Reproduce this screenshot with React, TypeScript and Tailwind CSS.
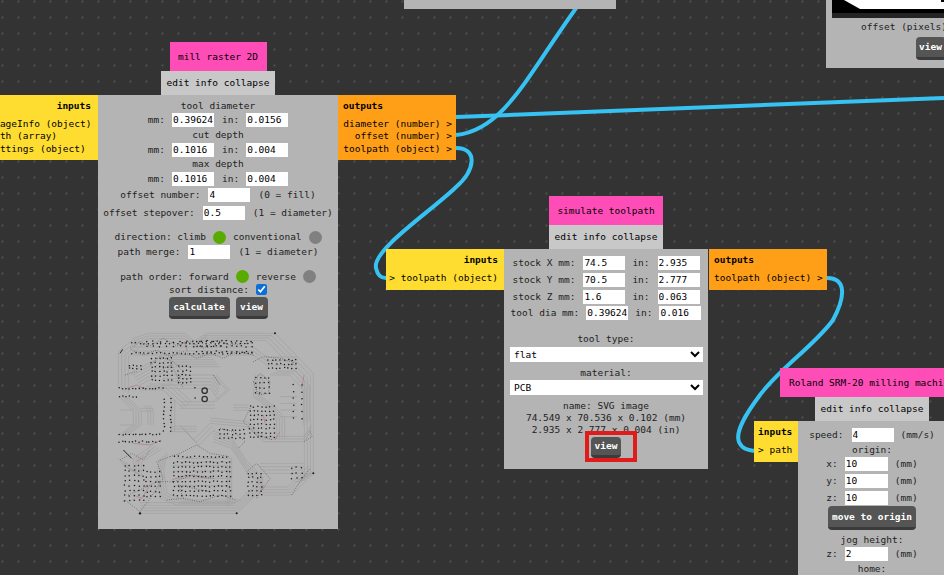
import React from "react";

const hash = (n: number) => {
  const s = Math.sin(n * 127.1 + 11.7) * 43758.5453;
  return s - Math.floor(s);
};

type P = [number, number];
const bundles: { pts: P[]; n: number; dx: number; dy: number }[] = [
  { pts: [[320, 25], [525, 25], [640, 145], [640, 445], [610, 450]], n: 4, dx: -9, dy: 7 },
  { pts: [[100, 40], [145, 25], [255, 25], [282, 48], [320, 25]], n: 3, dx: 0, dy: 8 },
  { pts: [[100, 42], [55, 80], [55, 190]], n: 4, dx: 10, dy: 5 },
  { pts: [[60, 215], [100, 260], [100, 300], [58, 330]], n: 4, dx: 8, dy: 0 },
  { pts: [[150, 240], [160, 260], [160, 300]], n: 3, dx: -8, dy: 0 },
  { pts: [[60, 300], [100, 300]], n: 2, dx: 0, dy: -45 },
  { pts: [[90, 145], [190, 90], [330, 90]], n: 6, dx: 6, dy: 7 },
  { pts: [[190, 150], [340, 150], [360, 180]], n: 5, dx: -2, dy: 10 },
  { pts: [[250, 250], [190, 195], [120, 195]], n: 4, dx: 9, dy: -6 },
  { pts: [[240, 250], [345, 250]], n: 3, dx: 0, dy: -10 },
  { pts: [[465, 150], [460, 215], [500, 245], [530, 280], [530, 340]], n: 4, dx: 8, dy: 0 },
  { pts: [[510, 150], [570, 150], [610, 195], [610, 300]], n: 3, dx: 9, dy: -6 },
  { pts: [[635, 315], [612, 350], [490, 350], [440, 305], [330, 295]], n: 3, dx: 0, dy: -8 },
  { pts: [[330, 295], [280, 345], [240, 300]], n: 3, dx: 8, dy: 8 },
  { pts: [[215, 320], [290, 320]], n: 3, dx: 0, dy: -8 },
  { pts: [[215, 320], [215, 225]], n: 2, dx: 9, dy: 0 },
  { pts: [[120, 565], [410, 565], [490, 490], [440, 440], [395, 370], [340, 350]], n: 5, dx: 0, dy: -8 },
  { pts: [[480, 415], [610, 415]], n: 4, dx: 0, dy: 10 },
  { pts: [[490, 510], [575, 510], [640, 445]], n: 4, dx: -4, dy: -8 },
  { pts: [[55, 400], [75, 425], [100, 440], [100, 400], [160, 360]], n: 4, dx: 8, dy: 4 },
  { pts: [[180, 400], [170, 450], [180, 520], [230, 540], [400, 540]], n: 4, dx: 7, dy: -5 },
  { pts: [[230, 400], [395, 400], [395, 520]], n: 3, dx: -6, dy: 11 },
  { pts: [[225, 438], [390, 438]], n: 3, dx: 0, dy: 22 },
  { pts: [[100, 90], [460, 90], [500, 120], [590, 120]], n: 3, dx: 0, dy: -12 },
  { pts: [[540, 215], [590, 215]], n: 4, dx: 0, dy: 20 },
  { pts: [[340, 230], [380, 195], [340, 150]], n: 2, dx: 8, dy: 0 },
  { pts: [[400, 240], [445, 240]], n: 3, dx: 0, dy: 8 },
  { pts: [[120, 250], [160, 250]], n: 2, dx: 0, dy: 8 },
];

const grids: [number, number, number, number, number, number][] = [
  [95, 55, 30, 12.5, 1, 0],
  [95, 85, 30, 12.5, 1, 0],
  [88, 122, 4, 12, 2, 9],
  [58, 190, 14, 10, 1, 0],
  [58, 215, 6, 10, 1, 0],
  [192, 222, 2, 20, 9, 12],
  [58, 328, 13, 10, 1, 0],
  [58, 350, 13, 10, 1, 0],
  [222, 412, 15, 12, 4, 14],
  [222, 470, 15, 12, 4, 14],
  [75, 422, 5, 14, 8, 15],
  [140, 440, 4, 13, 6, 15],
  [580, 180, 2, 26, 6, 20],
  [468, 158, 4, 13, 4, 15],
  [450, 245, 7, 12, 8, 13],
  [360, 315, 7, 12, 3, 12],
  [445, 445, 4, 13, 6, 13],
  [575, 428, 3, 15, 3, 16],
  [155, 100, 6, 12, 6, 13],
  [235, 125, 4, 12, 5, 12],
  [505, 105, 8, 12, 3, 12],
  [285, 190, 1, 10, 2, 30],
  [225, 395, 14, 12, 1, 0],
  [140, 50, 12, 20, 2, 14],
  [290, 48, 12, 15, 3, 16],
];

const wiggles = [
  "90,70 120,50 150,62 190,40 230,62 270,50 310,70 350,45 390,60 440,55",
  "95,75 130,90 170,75 210,95 250,80 290,100 330,85 370,100 410,80 460,90",
  "150,120 180,95 220,110 250,140 230,170",
  "75,150 110,140",
  "340,150 360,180",
  "190,130 215,120 250,190",
  "60,405 95,385 130,405 150,375",
  "75,525 120,560 150,520 190,460 170,410 210,395",
  "210,395 240,385 290,360 330,385 390,395",
  "85,510 130,490 170,470 220,470 280,450 340,460",
  "200,525 250,520 300,530 360,510 410,525",
  "450,250 430,290 470,330 520,345",
  "440,440 470,415 510,460 470,520",
  "360,310 400,320 435,350 415,370",
  "460,110 490,95 540,100 590,115",
  "460,170 480,145 510,170 505,205 475,210 460,170",
  "250,520 235,480 280,490 330,500",
  "575,510 600,470 630,430",
  "630,320 636,335 612,350",
];

const reds = [
  "80,190 110,180 130,190",
  "240,60 255,50 262,80",
  "612,150 605,190",
  "100,355 150,360 185,345",
  "215,465 260,450 330,460",
  "100,510 125,520 150,480",
  "525,345 540,320",
  "480,500 490,480",
  "370,55 385,45",
  "490,270 495,295",
  "110,410 130,395",
];

function Pcb() {
  const dots: P[] = [];
  let seed = 1;
  grids.forEach(([x, y, cols, sx, rows, sy]) => {
    for (let r = 0; r < rows; r++)
      for (let c = 0; c < cols; c++) {
        seed += 1;
        dots.push([x + c * sx + (hash(seed) - 0.5) * 4, y + r * sy + (hash(seed + 500) - 0.5) * 4]);
      }
  });
  return (
    <svg viewBox="0 0 720 615" className="ml-[2px] mt-[6px] block h-[205px] w-[240px]">
      {bundles.map((b, i) =>
        Array.from({ length: b.n }).map((_, k) => (
          <polyline
            key={`${i}-${k}`}
            fill="none"
            stroke="#9b9b9b"
            strokeWidth="1.7"
            points={b.pts.map((p) => `${p[0] + k * b.dx},${p[1] + k * b.dy}`).join(" ")}
          />
        ))
      )}
      <g fill="none" stroke="#2a2a2a" strokeWidth="2" strokeDasharray="2 5">
        {wiggles.map((w, i) => (
          <polyline key={i} points={w} />
        ))}
      </g>
      <g fill="none" stroke="#b0687c" strokeWidth="1.6">
        {reds.map((r, i) => (
          <polyline key={i} points={r} />
        ))}
      </g>
      <g fill="none" stroke="#333" strokeWidth="4">
        <circle cx="314" cy="197" r="8" />
        <circle cx="314" cy="222" r="8" />
      </g>
      <g stroke="#222" strokeWidth="3">
        <line x1="60" y1="85" x2="68" y2="73" />
        <line x1="70" y1="375" x2="95" y2="400" />
      </g>
      <g fill="#1a1a1a">
        {dots.map((d, i) => (
          <circle key={i} cx={d[0]} cy={d[1]} r="2.3" />
        ))}
        <circle cx="120" cy="565" r="3.5" />
        <circle cx="410" cy="565" r="3" />
        <circle cx="525" cy="25" r="3" />
        <circle cx="640" cy="445" r="3" />
      </g>
    </svg>
  );
}

function Field({ value, w = "w-[42px]" }: { value: string; w?: string }) {
  return (
    <input
      readOnly
      value={value}
      className={`${w} h-[14px] shrink-0 bg-white pl-[1px] text-[9.5px] leading-[14px] text-black outline-none`}
    />
  );
}

function Row({ className = "", children }: { className?: string; children: React.ReactNode }) {
  return <div className={`flex items-center justify-center whitespace-pre ${className}`}>{children}</div>;
}

function Btn({ children, className = "" }: { children: React.ReactNode; className?: string }) {
  return (
    <div
      className={`flex items-center justify-center rounded-[4px] border-b-[3px] border-[#3b3b3b] bg-[#555555] font-bold text-white ${className}`}
    >
      {children}
    </div>
  );
}

function Dot({ on }: { on?: boolean }) {
  return <span className={`size-[13px] shrink-0 rounded-full ${on ? "bg-[#5aab00]" : "bg-[#808080]"}`} />;
}

function Node({
  title,
  className,
  cols,
  titleClass,
  inputs,
  outputs,
  children,
}: {
  title: string;
  className: string;
  cols: string;
  titleClass: string;
  inputs: React.ReactNode;
  outputs?: React.ReactNode;
  children: React.ReactNode;
}) {
  return (
    <div className={`absolute grid ${cols} ${className}`}>
      <div className="col-start-2 flex justify-center">
        <div className={`flex h-[29px] shrink-0 items-center justify-center whitespace-pre bg-[#ff4db8] text-black ${titleClass}`}>
          {title}
        </div>
      </div>
      <div className="col-start-2 flex justify-center">
        <div className="flex h-[24px] w-[114px] shrink-0 items-center justify-center whitespace-pre bg-[#c8c8c8] text-black">
          edit info collapse
        </div>
      </div>
      <div className="col-start-1 row-start-3">{inputs}</div>
      <div className="col-start-2 row-start-3">{children}</div>
      {outputs && <div className="col-start-3 row-start-3">{outputs}</div>}
    </div>
  );
}

export default function App() {
  return (
    <div className="relative h-[575px] w-[944px] overflow-hidden bg-[#333333] bg-[radial-gradient(circle,#505050_0.7px,transparent_1.2px)] bg-size-[16px_16px] bg-position-[10.5px_9.5px] font-['DejaVu_Sans_Mono',monospace] text-[9.5px] leading-none text-[#222]">
      <svg className="absolute inset-0" width="944" height="575" fill="none" stroke="#36c3f3" strokeWidth="4">
        <path d="M456 117 L944 98" />
        <path d="M456 135 C506 130 530 70 582 0" />
        <path d="M456 148 C478 148 476 170 455 188 C430 212 372 250 376 268 C378 277 382 278 386 278" />
        <path d="M827 278 C846 278 846 296 833 320 C815 345 780 368 760 395 C745 415 735 432 739 442 C742 449 748 450 754 451" />
      </svg>

      <div className="absolute left-[404px] top-0 h-[9px] w-[212px] bg-[#b4b4b4]" />

      <div className="absolute left-[826px] top-0 flex h-[68px] w-[154px] flex-col items-center bg-[#b4b4b4]">
        <svg width="142" height="18" className="shrink-0">
          <rect width="142" height="13" fill="#000" />
          <rect y="13" width="142" height="5" fill="#242424" />
          <polygon points="12,0 28,9 142,9 142,0" fill="#fff" />
          <rect x="109" y="0" width="3" height="2" fill="#000" />
        </svg>
        <div className="ml-[2px] mt-[4px] whitespace-pre">offset (pixels)</div>
        <Btn className="ml-[55px] mt-[5px] h-[23px] w-[30px] shrink-0">view</Btn>
      </div>

      <Node
        title="mill raster 2D"
        className="left-[-30px] top-[42px]"
        cols="grid-cols-[128px_240px_118px]"
        titleClass="w-[97px]"
        inputs={
          <div className="h-[65px] bg-[#fedd30] px-[7px] text-black">
            <div className="flex h-[22px] items-center justify-end font-bold">inputs</div>
            <div className="whitespace-pre">
              <div className="flex h-[13px] items-center">{"> imageInfo (object)"}</div>
              <div className="flex h-[12px] items-center">{"> path (array)"}</div>
              <div className="flex h-[13px] items-center">{"> settings (object)"}</div>
            </div>
          </div>
        }
        outputs={
          <div className="h-[65px] bg-[#ff9f18] pl-[5px] pr-[4px] text-black">
            <div className="flex h-[22px] items-center font-bold">outputs</div>
            <div className="whitespace-pre text-right">
              <div className="flex h-[13px] items-center justify-end">{"diameter (number) >"}</div>
              <div className="flex h-[12px] items-center justify-end">{"offset (number) >"}</div>
              <div className="flex h-[13px] items-center justify-end">{"toolpath (object) >"}</div>
            </div>
          </div>
        }
      >
        <div className="h-[434px] bg-[#b4b4b4] pt-[3px]">
          <Row className="h-[15px]">tool diameter</Row>
          <Row className="h-[14px] gap-[7px]">
            mm:<Field value="0.39624" /><span className="ml-px">in:</span><Field value="0.0156" />
          </Row>
          <Row className="h-[15px]">cut depth</Row>
          <Row className="h-[15px] gap-[7px]">
            mm:<Field value="0.1016" /><span className="ml-px">in:</span><Field value="0.004" />
          </Row>
          <Row className="h-[14px]">max depth</Row>
          <Row className="h-[15px] gap-[7px]">
            mm:<Field value="0.1016" /><span className="ml-px">in:</span><Field value="0.004" />
          </Row>
          <Row className="h-[18px] gap-[8px]">
            offset number:<Field value="4" />(0 = fill)
          </Row>
          <Row className="h-[17px] gap-[8px]">
            offset stepover:<Field value="0.5" />(1 = diameter)
          </Row>
          <Row className="mt-[8px] h-[16px] gap-[7px]">
            direction: climb<Dot on />conventional<Dot />
          </Row>
          <Row className="h-[14px] gap-[8px]">
            path merge:<Field value="1" />(1 = diameter)
          </Row>
          <Row className="mt-[10px] h-[15px] gap-[7px]">
            path order: forward<Dot on />reverse<Dot />
          </Row>
          <Row className="h-[11px] gap-[7px]">
            sort distance:
            <input type="checkbox" checked readOnly className="m-0 size-[11px] accent-[#0b6fd6]" />
          </Row>
          <Row className="mt-[2px] h-[22px] gap-[6px]">
            <Btn className="h-[22px] w-[61px]">calculate</Btn>
            <Btn className="h-[22px] w-[32px]">view</Btn>
          </Row>
          <Pcb />
        </div>
      </Node>

      <Node
        title="simulate toolpath"
        className="left-[386px] top-[196px]"
        cols="grid-cols-[118px_204px_119px]"
        titleClass="w-[114px]"
        inputs={
          <div className="h-[41px] bg-[#fedd30] px-[6px] text-black">
            <div className="flex h-[22px] items-center justify-end font-bold">inputs</div>
            <div className="flex h-[14px] items-center justify-end whitespace-pre">{"> toolpath (object)"}</div>
          </div>
        }
        outputs={
          <div className="ml-px h-[41px] bg-[#ff9f18] pl-[5px] pr-[3px] text-black">
            <div className="flex h-[22px] items-center font-bold">outputs</div>
            <div className="flex h-[14px] items-center whitespace-pre">{"toolpath (object) >"}</div>
          </div>
        }
      >
        <div className="relative h-[220px] bg-[#b4b4b4] pt-[6px]">
          <Row className="h-[16px] gap-[8px]">
            stock X mm:<Field value="74.5" /><span className="-ml-px">in:</span><Field value="2.935" />
          </Row>
          <Row className="h-[17px] gap-[8px]">
            stock Y mm:<Field value="70.5" /><span className="-ml-px">in:</span><Field value="2.777" />
          </Row>
          <Row className="h-[17px] gap-[8px]">
            stock Z mm:<Field value="1.6" /><span className="-ml-px">in:</span><Field value="0.063" />
          </Row>
          <Row className="h-[16px] gap-[7px]">
            tool dia mm:<Field value="0.39624" />in:<Field value="0.016" />
          </Row>
          <Row className="mt-[11px] h-[14px]">tool type:</Row>
          <div className="px-[6px] pt-px">
            <select className="block h-[15px] w-[193px] bg-white text-[9.5px] leading-none text-black outline-none">
              <option>flat</option>
            </select>
          </div>
          <Row className="mt-[4px] h-[14px]">material:</Row>
          <div className="px-[6px]">
            <select className="block h-[15px] w-[193px] bg-white text-[9.5px] leading-none text-black outline-none">
              <option>PCB</option>
            </select>
          </div>
          <Row className="mt-[5px] h-[12px]">name: SVG image</Row>
          <Row className="h-[12px]">74.549 x 70.536 x 0.102 (mm)</Row>
          <Row className="h-[12px]">2.935 x 2.777 x 0.004 (in)</Row>
          <Row className="mt-px">
            <Btn className="h-[21px] w-[30px]">view</Btn>
          </Row>
          <div className="absolute left-[81px] top-[182px] h-[31px] w-[52px] border-4 border-[#e11a1a]" />
        </div>
      </Node>

      <Node
        title="Roland SRM-20 milling machine"
        className="left-[754px] top-[368px]"
        cols="grid-cols-[44px_148px]"
        titleClass="w-[184px]"
        inputs={
          <div className="h-[41px] bg-[#fedd30] pl-[4px] text-black">
            <div className="flex h-[22px] items-center font-bold">inputs</div>
            <div className="flex h-[14px] items-center whitespace-pre">{"> path"}</div>
          </div>
        }
      >
        <div className="h-[155px] overflow-hidden bg-[#b4b4b4] pt-[7px]">
          <Row className="h-[14px] gap-[7px]">
            speed:<span className="ml-px"><Field value="4" /></span>(mm/s)
          </Row>
          <Row className="mt-px h-[14px]">origin:</Row>
          <Row className="h-[14px] gap-[7px]">x:<Field value="10" w="w-[43px]" />(mm)</Row>
          <Row className="mt-[3px] h-[14px] gap-[7px]">y:<Field value="10" w="w-[43px]" />(mm)</Row>
          <Row className="mt-[3px] h-[14px] gap-[7px]">z:<Field value="10" w="w-[43px]" />(mm)</Row>
          <Row className="mt-px">
            <Btn className="h-[24px] w-[88px]">move to origin</Btn>
          </Row>
          <Row className="mt-[3px] h-[14px]">jog height:</Row>
          <Row className="h-[14px] gap-[7px]">z:<Field value="2" w="w-[43px]" />(mm)</Row>
          <Row className="mt-px h-[14px]">home:</Row>
        </div>
      </Node>
    </div>
  );
}
